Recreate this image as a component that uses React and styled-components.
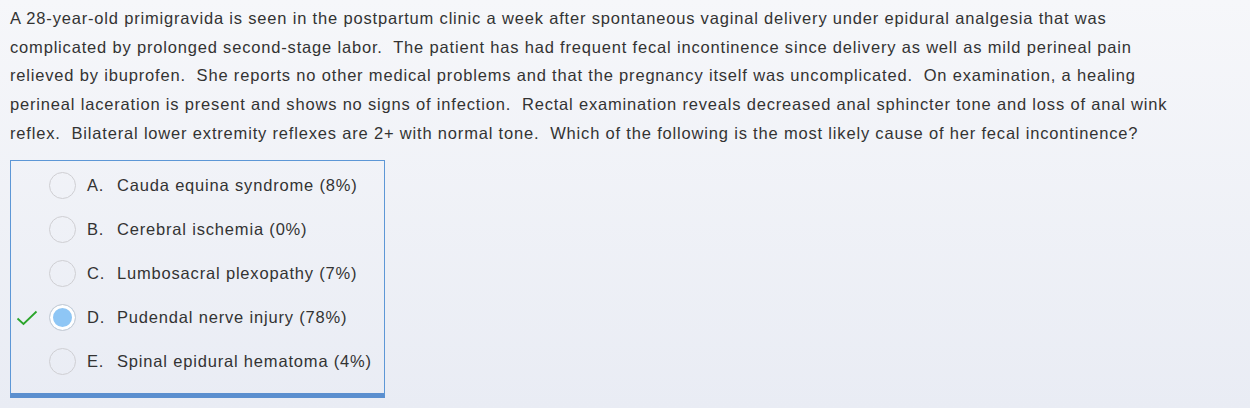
import styled, { createGlobalStyle } from "styled-components";

const GlobalStyle = createGlobalStyle`
  html, body {
    margin: 0;
    padding: 0;
  }
  body {
    font-family: "Liberation Sans", Arial, sans-serif;
    color: #333333;
    background: linear-gradient(180deg, #f6f7fa 0%, #e9ecf4 100%);
    min-height: 408px;
  }
`;

const stemLines = [
  "A 28-year-old primigravida is seen in the postpartum clinic a week after spontaneous vaginal delivery under epidural analgesia that was",
  "complicated by prolonged second-stage labor.\u00a0 The patient has had frequent fecal incontinence since delivery as well as mild perineal pain",
  "relieved by ibuprofen.\u00a0 She reports no other medical problems and that the pregnancy itself was uncomplicated.\u00a0 On examination, a healing",
  "perineal laceration is present and shows no signs of infection.\u00a0 Rectal examination reveals decreased anal sphincter tone and loss of anal wink",
  "reflex.\u00a0 Bilateral lower extremity reflexes are 2+ with normal tone.\u00a0 Which of the following is the most likely cause of her fecal incontinence?",
];

const options = [
  { letter: "A.", text: "Cauda equina syndrome (8%)" },
  { letter: "B.", text: "Cerebral ischemia (0%)" },
  { letter: "C.", text: "Lumbosacral plexopathy (7%)" },
  { letter: "D.", text: "Pudendal nerve injury (78%)", correct: true, selected: true },
  { letter: "E.", text: "Spinal epidural hematoma (4%)" },
];

function App() {
  return (
    <>
      <GlobalStyle />
      <Page>
        <Stem>
          {stemLines.map((line, i) => (
            <StemLine key={i}>{line}</StemLine>
          ))}
        </Stem>
        <Choices>
          {options.map((opt) => (
            <Choice key={opt.letter}>
              <Mark>
                {opt.correct && (
                  <svg width="22" height="16" viewBox="0 0 22 16">
                    <path d="M1.5 8.5 L7.5 14 L20.5 1.5" fill="none" stroke="#2ba52b" strokeWidth="1.8" />
                  </svg>
                )}
              </Mark>
              <Radio $selected={opt.selected} />
              <Letter>{opt.letter}</Letter>
              <Label>{opt.text}</Label>
            </Choice>
          ))}
        </Choices>
      </Page>
    </>
  );
}

const Page = styled.div`
  padding: 4px 10px 10px;
`;

const Stem = styled.div`
  font-size: 16.5px;
  letter-spacing: 0.82px;
  line-height: 28.7px;
`;

const StemLine = styled.div`
  white-space: nowrap;
`;

const Choices = styled.div`
  margin-top: 12px;
  width: 373px;
  border: 1px solid #5d97d6;
  border-bottom: 5px solid #5b8fcf;
  padding: 3px 0 9px;
`;

const Choice = styled.div`
  display: flex;
  align-items: center;
  height: 44px;
  padding-left: 4px;
  font-size: 16.5px;
  letter-spacing: 0.82px;
`;

const Mark = styled.div`
  width: 33px;
  display: flex;
  align-items: center;
  padding-left: 1px;
`;

const Radio = styled.span`
  box-sizing: border-box;
  width: 27px;
  height: 27px;
  border-radius: 50%;
  border: 1.5px solid #cfcfd3;
  background: ${(p) => (p.$selected ? "#8ec6f5" : "transparent")};
  box-shadow: ${(p) => (p.$selected ? "inset 0 0 0 3px #ffffff" : "none")};
  flex-shrink: 0;
`;

const Letter = styled.span`
  width: 30px;
  margin-left: 11px;
`;

const Label = styled.span``;

export default App;
